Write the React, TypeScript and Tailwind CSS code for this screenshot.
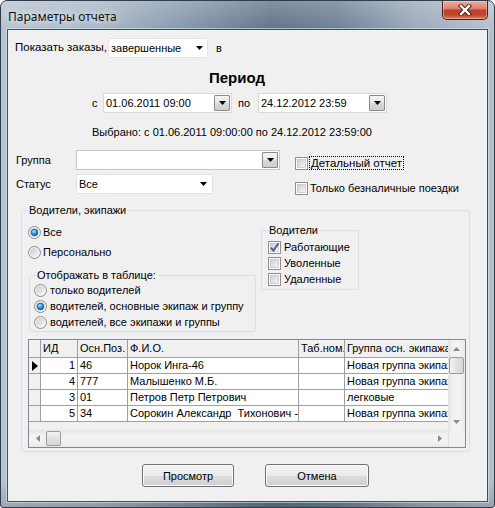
import React from "react";

function Arrow({ color = "#000" }: { color?: string }) {
  return (
    <svg width="7" height="4" viewBox="0 0 7 4" className="shrink-0">
      <polygon points="0,0 7,0 3.5,4" fill={color} />
    </svg>
  );
}

function Radio({ checked }: { checked?: boolean }) {
  return (
    <svg width="13" height="13" viewBox="0 0 13 13" className="shrink-0">
      <defs>
        <linearGradient id="rgrad" x1="0" y1="0" x2="1" y2="1">
          <stop offset="0" stopColor="#c9c9c9" />
          <stop offset="1" stopColor="#fafafa" />
        </linearGradient>
        <radialGradient id="rblue" cx="40%" cy="35%" r="75%">
          <stop offset="0" stopColor="#a6dcff" />
          <stop offset="0.55" stopColor="#2b8bd6" />
          <stop offset="1" stopColor="#0d4a86" />
        </radialGradient>
      </defs>
      <circle cx="6.5" cy="6.5" r="6" fill="#f4f4f4" stroke="#8b8b8b" strokeWidth="1" />
      <circle cx="6.5" cy="6.5" r="4.5" fill="url(#rgrad)" />
      {checked && <circle cx="6.5" cy="6.5" r="3.4" fill="url(#rblue)" stroke="#1b4f80" strokeWidth="0.6" />}
    </svg>
  );
}

function Check({ checked }: { checked?: boolean }) {
  return (
    <svg width="13" height="13" viewBox="0 0 13 13" className="shrink-0">
      <defs>
        <linearGradient id="cgrad" x1="0" y1="0" x2="1" y2="1">
          <stop offset="0" stopColor="#cdcdcd" />
          <stop offset="1" stopColor="#f7f7f7" />
        </linearGradient>
      </defs>
      <rect x="0.5" y="0.5" width="12" height="12" fill="#fdfdfd" stroke="#8e8f8f" />
      <rect x="2.5" y="2.5" width="8" height="8" fill="url(#cgrad)" stroke="#b9b9b9" strokeWidth="0.6" />
      {checked && (
        <path d="M3 6.6 L5.4 9.6 L10.6 2.2" fill="none" stroke="#4b5d8f" strokeWidth="1.9" />
      )}
    </svg>
  );
}

function DropBtn() {
  return (
    <div className="w-[16px] h-[16px] border border-[#8a8a8a] rounded-[1px] bg-[linear-gradient(to_bottom,#f4f4f4_0%,#e6e6e6_50%,#d8d8d8_51%,#cfcfcf_100%)] flex items-center justify-center shrink-0">
      <Arrow />
    </div>
  );
}

function DatePicker({ value }: { value: string }) {
  return (
    <div className="w-[129px] h-[20px] border border-[#d9d9d9] bg-white flex items-center pl-[2px] pr-[1px]">
      <span className="flex-1 leading-[14px] whitespace-nowrap">{value}</span>
      <DropBtn />
    </div>
  );
}

function Fieldset({
  legend,
  className,
  legendClass,
  children,
}: {
  legend: string;
  className: string;
  legendClass: string;
  children: React.ReactNode;
}) {
  return (
    <fieldset className={"min-w-0 border border-[#d5dfe5] rounded-[3px] " + className}>
      <legend className={"leading-[13px] px-[1px] " + legendClass}>{legend}</legend>
      {children}
    </fieldset>
  );
}

const rows = [
  ["1", "46", "Норок Инга-46", "", "Новая группа экипажей"],
  ["4", "777", "Малышенко М.Б.", "", "Новая группа экипажей"],
  ["3", "01", "Петров Петр Петрович", "", "легковые"],
  ["5", "34", "Сорокин Александр  Тихонович - 34", "", "Новая группа экипажей"],
];

const cell = "border-r border-b border-[#a0a0a0] px-[2px] whitespace-pre overflow-hidden shrink-0";

function Grid() {
  return (
    <div className="w-[438px] h-[109px] border border-[#828790] bg-[#f0f0f0] flex flex-col">
      <div className="flex h-[90px]">
        <div className="w-[419px] flex flex-col">
          <div className="flex h-[18px] leading-[17px] bg-[#f0f0f0]">
            <div className={cell + " w-[12px]"}></div>
            <div className={cell + " w-[37px]"}>ИД</div>
            <div className={cell + " w-[50px]"}>Осн.Поз.</div>
            <div className={cell + " w-[171px]"}>Ф.И.О.</div>
            <div className={cell + " w-[46px] px-[1px]"}>Таб.ном.</div>
            <div className={cell + " w-[103px] border-r-0"}>Группа осн. экипажа</div>
          </div>
          {rows.map((r, i) => (
            <div key={i} className="flex h-[16px] leading-[15px]">
              <div className={cell + " w-[12px] bg-[#f0f0f0] flex items-center justify-center px-0"}>
                {i === 0 && (
                  <svg width="6" height="10" viewBox="0 0 6 10">
                    <polygon points="0,0 6,5 0,10" fill="#000" />
                  </svg>
                )}
              </div>
              <div className={cell + " w-[37px] bg-white text-right"}>{r[0]}</div>
              <div className={cell + " w-[50px] bg-white"}>{r[1]}</div>
              <div className={cell + " w-[171px] bg-white"}>{r[2]}</div>
              <div className={cell + " w-[46px] bg-white"}>{r[3]}</div>
              <div className={cell + " w-[103px] bg-white border-r-0"}>{r[4]}</div>
            </div>
          ))}
        </div>
        <div className="w-[17px] h-[90px] bg-[linear-gradient(to_right,#e3e3e3,#f2f2f2_30%,#f2f2f2_70%,#e8e8e8)] flex flex-col items-center">
          <div className="h-[17px] w-full flex items-center justify-center">
            <svg width="7" height="4" viewBox="0 0 7 4"><polygon points="0,4 7,4 3.5,0" fill="#8a8a8a" /></svg>
          </div>
          <div className="w-[15px] h-[17px] rounded-[2px] border border-[#9b9b9b] bg-[linear-gradient(to_right,#f3f3f3,#e2e2e2_50%,#d6d6d6)]"></div>
          <div className="flex-1"></div>
          <div className="h-[17px] w-full flex items-center justify-center">
            <Arrow color="#8a8a8a" />
          </div>
        </div>
      </div>
      <div className="flex h-[17px]">
        <div className="w-[419px] h-[17px] bg-[linear-gradient(to_bottom,#e3e3e3,#f2f2f2_30%,#f2f2f2_70%,#e8e8e8)] flex items-center">
          <div className="w-[17px] h-full flex items-center justify-center">
            <svg width="4" height="7" viewBox="0 0 4 7"><polygon points="4,0 4,7 0,3.5" fill="#8a8a8a" /></svg>
          </div>
          <div className="w-[15px] h-[15px] rounded-[2px] border border-[#9b9b9b] bg-[linear-gradient(to_bottom,#f3f3f3,#e2e2e2_50%,#d6d6d6)]"></div>
          <div className="flex-1"></div>
          <div className="w-[17px] h-full flex items-center justify-center">
            <svg width="4" height="7" viewBox="0 0 4 7"><polygon points="0,0 0,7 4,3.5" fill="#8a8a8a" /></svg>
          </div>
        </div>
        <div className="w-[17px] h-[17px] bg-[#f0f0f0] border-l border-[#e0e0e0]"></div>
      </div>
    </div>
  );
}

function WinButton({ label, w }: { label: string; w: string }) {
  return (
    <div
      className={
        "h-[23px] border border-[#707070] rounded-[3px] shadow-[inset_0_0_0_1px_#fbfbfb] bg-[linear-gradient(to_bottom,#f2f2f2_0%,#ebebeb_50%,#dddddd_51%,#cfcfcf_100%)] flex items-center justify-center leading-[14px] " +
        w
      }
    >
      {label}
    </div>
  );
}

export default function App() {
  return (
    <div className="w-[495px] h-[508px] overflow-hidden rounded-t-[7px] rounded-b-[3px] border border-[#2f3d4c] bg-[linear-gradient(to_bottom,rgba(255,255,255,0.22),rgba(255,255,255,0)_30px,rgba(0,0,0,0)_480px,rgba(0,0,0,0.15)),linear-gradient(to_right,#b6c3d0_0%,#a8b6c5_20%,#8799ad_36%,#5f7389_55%,#6c7f96_68%,#9aa9b9_84%,#b4c0cc_100%)] font-['Liberation_Sans',Arial,sans-serif] text-[11px] text-black">
      {/* title bar */}
      <div className="h-[28px] flex items-start justify-between">
        <div className="pl-[7px] mt-[8px] text-[12px] leading-[15px] font-['Noto_Sans',sans-serif] text-[#111] [text-shadow:0_0_6px_rgba(255,255,255,0.9),0_0_10px_rgba(255,255,255,0.6)]">
          Параметры отчета
        </div>
        <div className="mr-[6px] w-[46px] h-[19px] rounded-b-[5px] border border-t-0 border-[#4d1f17] shadow-[inset_0_0_0_1px_rgba(255,220,210,0.45)] bg-[linear-gradient(to_bottom,#e9ad9e_0%,#da8470_42%,#c5412b_50%,#c2432d_75%,#dc7a57_100%)] flex items-center justify-center">
          <svg width="14" height="12" viewBox="0 0 14 12">
            <path d="M3 2 L11 10 M11 2 L3 10" stroke="#3a1a14" strokeWidth="4.2" strokeLinecap="square" />
            <path d="M3 2 L11 10 M11 2 L3 10" stroke="#ffffff" strokeWidth="2.4" strokeLinecap="square" />
          </svg>
        </div>
      </div>

      {/* client area */}
      <div className="ml-[6px] w-[481px] h-[473px] border border-[#3e4e60] shadow-[0_0_0_1px_rgba(220,230,240,0.6)] bg-[#f0f0f0] flex flex-col">
        <div className="mt-[8px] ml-[7px] flex items-center h-[20px]">
          <span className="w-[93px] whitespace-nowrap text-[11.5px]">Показать заказы,</span>
          <div className="w-[100px] h-[20px] bg-white border border-[#e3e3e3] flex items-center pl-[2px] pr-[4px]">
            <span className="flex-1 leading-[14px]">завершенные</span>
            <Arrow />
          </div>
          <span className="ml-[8px]">в</span>
        </div>

        <div className="mt-[11px] pl-[201px] font-bold text-[15px] leading-[17px]">Период</div>

        <div className="mt-[7px] pl-[84px] flex items-center h-[20px]">
          <span className="w-[11px]">с</span>
          <DatePicker value="01.06.2011 09:00" />
          <span className="ml-[6px] w-[20px]">по</span>
          <DatePicker value="24.12.2012 23:59" />
        </div>

        <div className="mt-[12px] pl-[84px] leading-[14px] whitespace-nowrap">
          Выбрано: с 01.06.2011 09:00:00 по 24.12.2012 23:59:00
        </div>

        <div className="mt-[11px] flex">
          <div className="pl-[8px] flex flex-col">
            <div className="flex items-center h-[20px]">
              <span className="w-[60px]">Группа</span>
              <div className="w-[204px] h-[20px] bg-white border border-[#c5c7cc] flex items-center justify-end pr-[1px]">
                <DropBtn />
              </div>
            </div>
            <div className="mt-[4px] flex items-center h-[20px]">
              <span className="w-[60px]">Статус</span>
              <div className="w-[137px] h-[20px] bg-white border border-[#e3e3e3] flex items-center pl-[2px] pr-[5px]">
                <span className="flex-1 leading-[14px]">Все</span>
                <Arrow />
              </div>
            </div>
          </div>
          <div className="ml-[15px] flex flex-col">
            <div className="mt-[6px] h-[14px] flex items-center">
              <Check />
              <span className="ml-[1px] border border-dotted border-black px-[1px] leading-[12px] text-[11.5px]">Детальный отчет</span>
            </div>
            <div className="mt-[11px] h-[14px] flex items-center">
              <Check />
              <span className="ml-[2px] leading-[12px] whitespace-nowrap">Только безналичные поездки</span>
            </div>
          </div>
        </div>

        <Fieldset
          legend="Водители, экипажи"
          className="mt-[9px] ml-[13px] w-[449px] pl-[6px] pr-[3px] pt-[6px] pb-[3px]"
          legendClass=""
        >
          <div className="flex items-start">
            <div className="w-[228px] flex flex-col">
              <div className="h-[18px] flex items-center">
                <Radio checked />
                <span className="ml-[2px]">Все</span>
              </div>
              <div className="mt-[2px] h-[18px] flex items-center">
                <Radio />
                <span className="ml-[2px]">Персонально</span>
              </div>
              <Fieldset
                legend="Отображать в таблице:"
                className="mt-[8px] ml-[1px] w-[227px] pl-[4px] pb-[1px]"
                legendClass="ml-[2px]"
              >
                <div className="h-[16px] flex items-center">
                  <Radio />
                  <span className="ml-[3px]">только водителей</span>
                </div>
                <div className="h-[16px] flex items-center">
                  <Radio checked />
                  <span className="ml-[3px] whitespace-nowrap">водителей, основные экипаж и группу</span>
                </div>
                <div className="h-[16px] flex items-center">
                  <Radio />
                  <span className="ml-[3px] whitespace-nowrap">водителей, все экипажи и группы</span>
                </div>
              </Fieldset>
            </div>
            <Fieldset
              legend="Водители"
              className="ml-[5px] mt-[1px] w-[98px] pl-[6px] pt-[2px] pb-[2px]"
              legendClass=""
            >
              <div className="h-[16px] flex items-center">
                <Check checked />
                <span className="ml-[3px]">Работающие</span>
              </div>
              <div className="h-[16px] flex items-center">
                <Check />
                <span className="ml-[3px]">Уволенные</span>
              </div>
              <div className="h-[16px] flex items-center">
                <Check />
                <span className="ml-[3px]">Удаленные</span>
              </div>
            </Fieldset>
          </div>
          <div className="mt-[7px]">
            <Grid />
          </div>
        </Fieldset>

        <div className="mt-[12px] ml-[134px] flex">
          <WinButton label="Просмотр" w="w-[92px]" />
          <div className="ml-[31px]">
            <WinButton label="Отмена" w="w-[104px]" />
          </div>
        </div>
      </div>
    </div>
  );
}
